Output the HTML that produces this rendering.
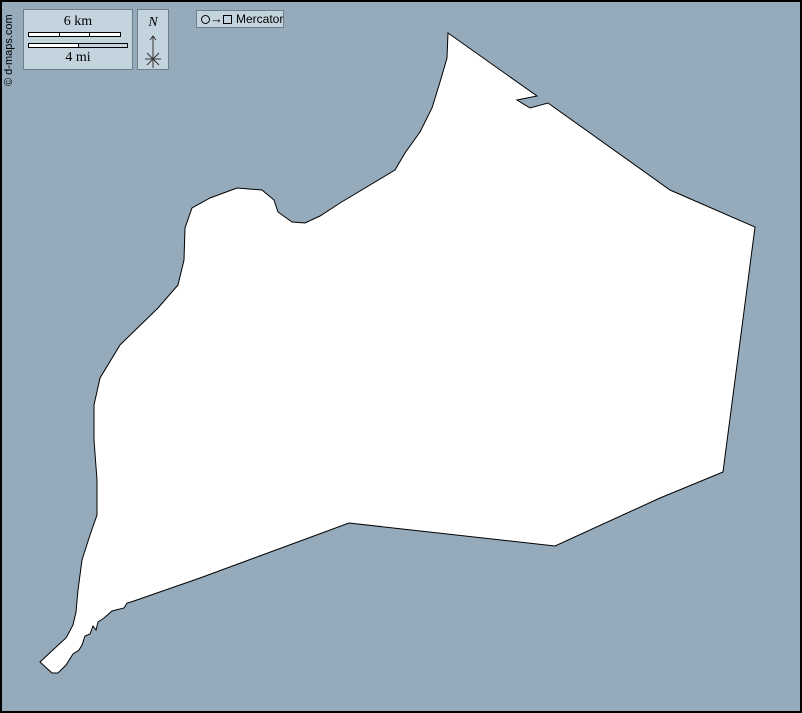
<!DOCTYPE html>
<html><head><style>
html,body{margin:0;padding:0;}
body{width:802px;height:713px;background:#95abbb;position:relative;overflow:hidden;font-family:"Liberation Serif",serif;}
.frame{position:absolute;left:0;top:0;width:798px;height:709px;border:2px solid #000;}
.box{position:absolute;background:#c4d4de;border:1px solid #6f7f8a;}
.credit{position:absolute;left:3px;top:86px;transform:rotate(-90deg);transform-origin:0 0;font:11px "Liberation Sans",sans-serif;color:#000;white-space:nowrap;}
</style></head><body>
<svg width="802" height="713" style="position:absolute;left:0;top:0">
<path fill="#fff" stroke="#000" stroke-width="1" d="M448,33 L537,96 L517,100 L530,108 L548,103 L670,190 L755,227 L723,472 L660,498 L555,546 L349,523 L200,578 L131,602 L127,603 L124,608 L112,611 L104,618 L98,622 L96,630 L93,626 L90,634 L85,636 L82,645 L79,650 L73,654 L66,665 L58,673 L52,673 L40,662 L55,648 L66,638 L73,625 L76,612 L78,590 L82,560 L90,535 L97,515 L97,480 L94,440 L94,405 L100,378 L120,345 L158,308 L178,285 L184,260 L185,228 L192,208 L210,198 L237,188 L262,190 L274,200 L278,212 L292,222 L305,223 L320,216 L340,203 L395,170 L405,153 L420,132 L432,108 L440,82 L447,58 Z"/>
</svg>
<div class="frame"></div>
<div class="credit">© d-maps.com</div>
<div class="box" style="left:23px;top:9px;width:108px;height:59px;">
 <div style="position:absolute;left:0;width:108px;top:4px;text-align:center;font-size:14px;">6 km</div>
 <div style="position:absolute;left:4px;top:22px;width:91px;height:3px;border:1px solid #000;background:linear-gradient(90deg,#fff 33%,#000 33%,#000 34%,#fff 34%,#fff 66%,#000 66%,#000 67%,#fff 67%);"></div>
 <div style="position:absolute;left:4px;top:33px;width:98px;height:3px;border:1px solid #000;background:linear-gradient(90deg,#fff 50%,#000 50%,#000 51%,#c4d4de 51%);"></div>
 <div style="position:absolute;left:0;width:108px;top:40px;text-align:center;font-size:14px;">4 mi</div>
</div>
<div class="box" style="left:137px;top:9px;width:30px;height:59px;">
 <div style="position:absolute;left:0;width:30px;top:5px;text-align:center;font-size:14px;font-style:italic;">N</div>
 <svg width="30" height="59" style="position:absolute;left:0;top:0"><path d="M15,26 V58 M7,49 H23 M9,43 L21,55 M21,43 L9,55 M12,30 L15,26 L18,30" stroke="#333" stroke-width="1" fill="none"/></svg>
</div>
<div class="box" style="left:196px;top:10px;width:86px;height:16px;font:12px 'Liberation Sans',sans-serif;line-height:16px;">
 <span style="position:absolute;left:4px;top:4px;width:7px;height:7px;border:1px solid #000;border-radius:50%;"></span>
 <span style="position:absolute;left:13px;top:0;font-size:13px;">→</span>
 <span style="position:absolute;left:26px;top:4px;width:7px;height:7px;border:1px solid #000;"></span>
 <span style="position:absolute;left:39px;top:0;">Mercator</span>
</div>
</body></html>
